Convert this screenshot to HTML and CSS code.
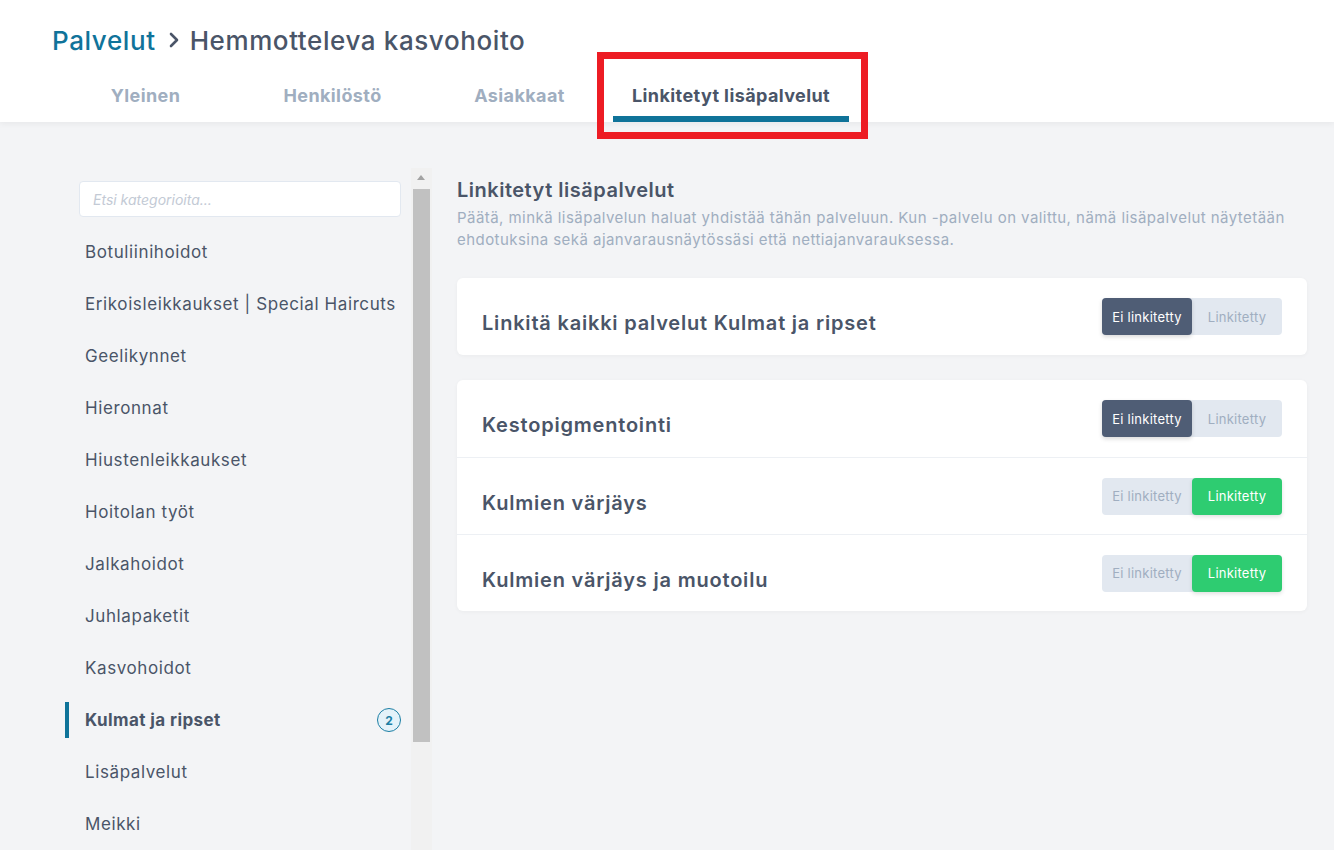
FILE: index.html
```html
<!DOCTYPE html>
<html lang="fi">
<head>
    <meta charset="UTF-8">
    <meta name="viewport" content="width=device-width, initial-scale=1.0">
    <title>Hemmotteleva kasvohoito</title>
    <link rel="stylesheet" href="styles.css">
</head>
<body>
    <!-- Header -->
    <header class="header">
        <h1 class="crumbs">
            <a href="#" class="crumb-link">Palvelut</a>
            <svg class="crumb-sep" width="14" height="18" viewBox="0 0 14 18">
                <path d="M4 3 L10 9 L4 15" fill="none" stroke="#4a5568" stroke-width="2.6" stroke-linecap="round" stroke-linejoin="round"/>
            </svg>
            <span>Hemmotteleva kasvohoito</span>
        </h1>
        <nav class="tabs">
            <a href="#" class="tab">Yleinen</a>
            <a href="#" class="tab">Henkilöstö</a>
            <a href="#" class="tab">Asiakkaat</a>
            <a href="#" class="tab active">Linkitetyt lisäpalvelut</a>
        </nav>
        <div class="highlight"></div>
    </header>

    <main class="page">
        <!-- Category list -->
        <aside class="sidebar">
            <div class="cat-list">
                <input type="text" class="search" placeholder="Etsi kategorioita...">
                <a href="#" class="cat">Botuliinihoidot</a>
                <a href="#" class="cat">Erikoisleikkaukset | Special Haircuts</a>
                <a href="#" class="cat">Geelikynnet</a>
                <a href="#" class="cat">Hieronnat</a>
                <a href="#" class="cat">Hiustenleikkaukset</a>
                <a href="#" class="cat">Hoitolan työt</a>
                <a href="#" class="cat">Jalkahoidot</a>
                <a href="#" class="cat">Juhlapaketit</a>
                <a href="#" class="cat">Kasvohoidot</a>
                <a href="#" class="cat active">Kulmat ja ripset <span class="badge">2</span></a>
                <a href="#" class="cat">Lisäpalvelut</a>
                <a href="#" class="cat">Meikki</a>
            </div>
            <div class="scrollbar">
                <div class="scroll-up"></div>
                <div class="scroll-thumb"></div>
            </div>
        </aside>

        <!-- Linked services -->
        <section class="content">
            <h2 class="content-title">Linkitetyt lisäpalvelut</h2>
            <p class="content-desc">Päätä, minkä lisäpalvelun haluat yhdistää tähän palveluun. Kun -palvelu on valittu, nämä lisäpalvelut näytetään ehdotuksina sekä ajanvarausnäytössäsi että nettiajanvarauksessa.</p>

            <div class="card">
                <div class="row">
                    <span class="row-title">Linkitä kaikki palvelut Kulmat ja ripset</span>
                    <div class="toggle">
                        <button class="opt off-on">Ei linkitetty</button>
                        <button class="opt">Linkitetty</button>
                    </div>
                </div>
            </div>

            <div class="card">
                <div class="row">
                    <span class="row-title">Kestopigmentointi</span>
                    <div class="toggle">
                        <button class="opt off-on">Ei linkitetty</button>
                        <button class="opt">Linkitetty</button>
                    </div>
                </div>
                <div class="row">
                    <span class="row-title">Kulmien värjäys</span>
                    <div class="toggle">
                        <button class="opt">Ei linkitetty</button>
                        <button class="opt on">Linkitetty</button>
                    </div>
                </div>
                <div class="row">
                    <span class="row-title">Kulmien värjäys ja muotoilu</span>
                    <div class="toggle">
                        <button class="opt">Ei linkitetty</button>
                        <button class="opt on">Linkitetty</button>
                    </div>
                </div>
            </div>
        </section>
    </main>
</body>
</html>
```

FILE: styles.css
```css
* {
    margin: 0;
    padding: 0;
    box-sizing: border-box;
}

body, html {
    height: 100%;
    overflow: hidden;
    font-family: 'Inter', 'Open Sans', sans-serif;
    background-color: #f3f4f6;
    color: #4a5568;
}

a {
    text-decoration: none;
    color: inherit;
}

/* Header */
.header {
    position: relative;
    background-color: white;
    padding: 24px 0 0 52px;
    height: 122px;
    box-shadow: 0 2px 6px rgba(0, 0, 0, 0.05);
}

.crumbs {
    display: flex;
    align-items: center;
    gap: 9px;
    height: 32px;
    font-size: 26px;
    font-weight: 500;
    color: #4a5568;
    letter-spacing: 0.6px;
}

.crumb-link {
    color: #10739a;
}

.crumb-sep {
    margin-left: 2px;
}

.tabs {
    display: flex;
    margin-top: 16px;
}

.tab {
    min-width: 187px;
    padding: 12px 19px 8px;
    line-height: 24px;
    text-align: center;
    font-size: 18px;
    font-weight: 700;
    letter-spacing: 0.4px;
    color: #a0aec0;
    border-bottom: 6px solid transparent;
}

.tab.active {
    color: #4a5568;
    border-bottom-color: #0f7399;
}

/* red marker around the active tab */
.highlight {
    position: absolute;
    left: 597px;
    top: 52px;
    width: 271px;
    height: 87px;
    border: 7px solid #ed1c24;
}

/* Page body */
.page {
    display: flex;
    align-items: flex-start;
    padding: 46px 27px 0 65px;
}

.sidebar {
    display: flex;
    width: 367px;
    height: 700px;
    flex-shrink: 0;
}

.cat-list {
    width: 346px;
    padding-top: 13px;
}

.search {
    display: block;
    width: 322px;
    height: 36px;
    margin: 0 0 9px 14px;
    padding: 0 13px;
    border: 1px solid #e2e8f0;
    border-radius: 4px;
    background: white;
    font-family: inherit;
    font-size: 14px;
    outline: none;
}

.search::placeholder {
    color: #c3cad5;
    font-style: italic;
}

.cat {
    position: relative;
    display: flex;
    align-items: center;
    justify-content: space-between;
    height: 52px;
    padding: 0 10px 0 20px;
    font-size: 17px;
    letter-spacing: 0.6px;
    color: #4a5568;
}

.cat.active {
    font-weight: 700;
    letter-spacing: 0.4px;
}

.cat.active::before {
    content: "";
    position: absolute;
    left: 0;
    top: 8px;
    bottom: 8px;
    width: 4px;
    background-color: #0f7399;
}

.badge {
    display: flex;
    align-items: center;
    justify-content: center;
    width: 24px;
    height: 24px;
    border: 1.5px solid #1b7ea4;
    border-radius: 50%;
    background-color: #e4f2f9;
    color: #1b7ea4;
    font-size: 12px;
    font-weight: 700;
    letter-spacing: 0;
}

/* fake classic scrollbar */
.scrollbar {
    width: 21px;
    height: 100%;
    background-color: #f1f1f1;
}

.scroll-up {
    position: relative;
    height: 21px;
}

.scroll-up::after {
    content: "";
    position: absolute;
    left: 6px;
    top: 7px;
    border-left: 4.5px solid transparent;
    border-right: 4.5px solid transparent;
    border-bottom: 5px solid #a3a3a3;
}

.scroll-thumb {
    height: 553px;
    margin: 0 2px;
    background-color: #c1c1c1;
}

/* Right side */
.content {
    flex: 1;
    margin-left: 25px;
    padding-top: 10px;
}

.content-title {
    font-size: 20px;
    line-height: 24px;
    font-weight: 600;
    letter-spacing: 0.5px;
    color: #4a5568;
    margin-bottom: 5px;
}

.content-desc {
    font-size: 15px;
    line-height: 22px;
    letter-spacing: 0.45px;
    color: #a0aec0;
    margin-bottom: 27px;
}

.card {
    background: white;
    border-radius: 6px;
    box-shadow: 0 1px 4px rgba(0, 0, 0, 0.04);
    margin-bottom: 25px;
}

.row {
    display: flex;
    align-items: center;
    justify-content: space-between;
    height: 77px;
    padding: 0 25px;
    border-top: 1px solid #edf0f4;
}

.row:first-child {
    border-top: none;
}

.row-title {
    margin-top: 13px;
    font-size: 20px;
    font-weight: 600;
    letter-spacing: 0.8px;
    color: #4a5568;
}

.toggle {
    display: flex;
    background-color: #e2e8f0;
    border-radius: 4px;
}

.opt {
    width: 90px;
    height: 37px;
    border: none;
    border-radius: 4px;
    background: transparent;
    font-family: inherit;
    font-size: 13px;
    letter-spacing: 0.25px;
    color: #a0aec0;
    cursor: pointer;
}

.opt.off-on {
    background-color: #4f5d75;
    color: white;
    box-shadow: 0 2px 4px rgba(0, 0, 0, 0.15);
}

.opt.on {
    background-color: #2ecc71;
    color: white;
    box-shadow: 0 2px 4px rgba(0, 0, 0, 0.12);
}
```
